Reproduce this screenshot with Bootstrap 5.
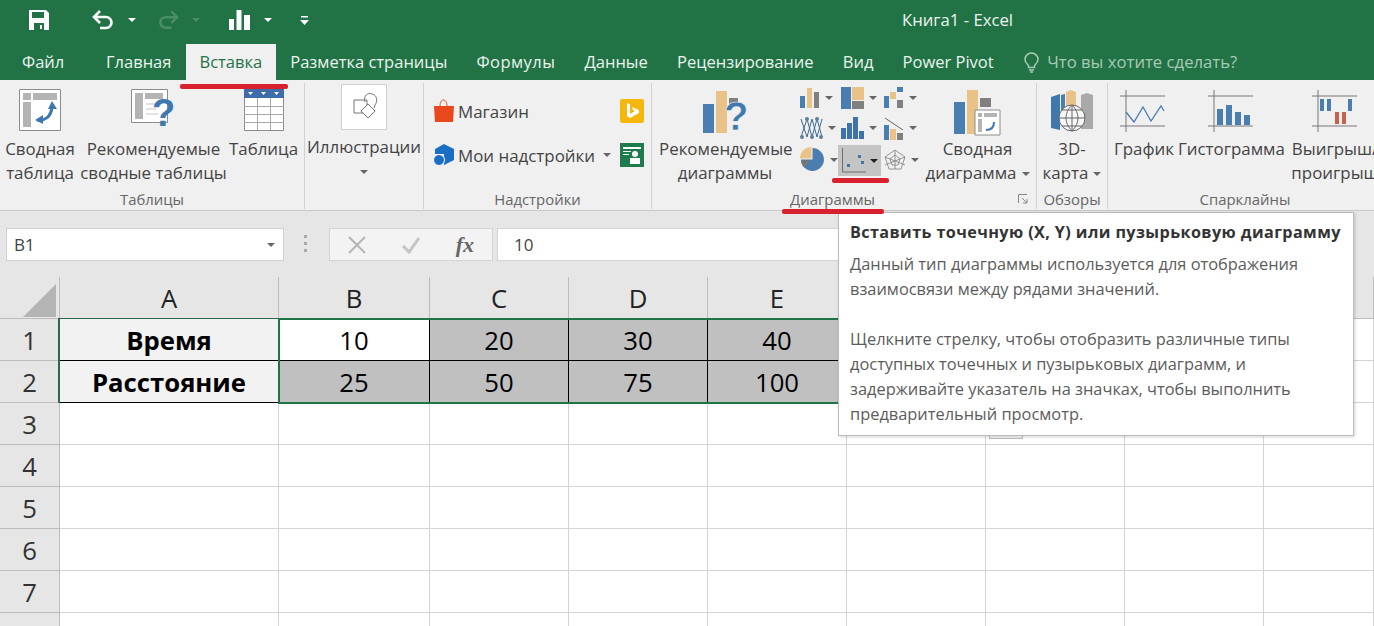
<!DOCTYPE html>
<html lang="ru"><head><meta charset="utf-8"><title>Книга1 - Excel</title>
<link href="https://cdn.jsdelivr.net/npm/bootstrap@5.3.0/dist/css/bootstrap.min.css" rel="stylesheet">
<style>
html,body{margin:0;height:626px;overflow:hidden;background:#fff}
body{font-family:"Open Sans","Noto Sans",sans-serif;position:relative;width:1374px}
svg{display:block;flex:none}
.x-caret{display:inline-block;width:0;height:0;border:4px solid transparent;border-top:4px solid #666;border-bottom:0;vertical-align:middle;margin-left:5px;flex:none}
/* title bar */
.x-title{height:40px;background:#217346;color:#fff}
.x-qat{height:40px;width:902px;padding-left:29px}
.x-doc{font-size:16.7px;line-height:40px;color:#eef5f0}
.x-wc{border-top-color:#fff;margin-left:14px}
.x-dc{border-top-color:#4c8d69;margin-left:13px}
.x-m43{margin-left:43px}.x-m22{margin-left:22px}.x-m29{margin-left:29px}.x-m35{margin-left:28px}
/* tabs */
.x-tabs{height:40px;background:#217346;color:#eaf3ed;font-size:16.5px;padding-left:8px}
.x-tab{height:36px;line-height:36px;padding:0 14.6px;white-space:nowrap}
.x-tab.on{background:#f0f0f0;color:#217346;padding:0 13.5px}
.x-tfile{width:86px;padding:0 14px}
.x-tmain{width:92px;padding:0 0 0 12px}
.x-tform{letter-spacing:.45px}
.x-tell{color:#a9c9b5;padding-left:16px;font-size:16.7px}
/* ribbon */
.x-ribbon{height:131px;background:#f0f0f0;color:#444;border-bottom:1px solid #c9c9c9;overflow:hidden}
.x-grp{height:126px;margin-top:3px;border-right:1px solid #d2d2d2;flex:none}
.x-body{height:106px}
.x-cap{height:20px;line-height:20px;text-align:center;font-size:14.9px;color:#666}
.x-btn{text-align:center;font-size:16.9px;line-height:24px;flex:none;white-space:nowrap;padding-top:6px}
.x-btn svg{margin:0 auto 6px;overflow:visible}
.x-tall{padding-top:7px}
.x-tall svg{margin-bottom:0}
.x-g1{width:305px}.x-g2{width:119px}.x-g3{width:228px}.x-g4{width:385px}.x-g5{width:71px}.x-g6{width:266px;border:0}
.x-w80{width:80px}.x-w147{width:147px}.x-w73{width:73px}
.x-ill{padding-top:1px}
.x-ill svg{margin-bottom:5px}
.x-addons{padding:16px 0 0 9px;width:220px;gap:20px}
.x-arow{height:24px}
.x-add{font-size:16.9px;line-height:24px;white-space:nowrap;margin-left:4px;padding-top:1px}
.x-addc{margin-left:8px}
.x-tile{width:24px;height:24px;border-radius:2px}
.x-bing{background:#f5b60e}
.x-pres{background:#1e7b4b;border-radius:0}
.x-rec{margin-left:7px;width:132px}
.x-gal{margin-left:9px;width:121px;display:grid;grid-template-columns:41px 43px 37px;grid-template-rows:30px 30px 33px}
.x-hi{background:#c4c4c4;height:31px;width:43px;margin:2px 0 0 -3px;padding-left:3px;align-self:start}
.x-hc{border-top-color:#222;margin-left:1px}
.x-piv{margin-left:4px;width:105px}
.x-capd{padding-left:138px;text-align:left}
.x-launch{margin:0 8px 0 auto}
.x-map{width:100%}
.x-spark{padding-left:6px;gap:6px}
.x-w58{width:58px}.x-w106{width:106px}.x-w90{width:90px}
.x-caps{padding-left:8px}
/* formula bar */
.x-fbar{height:66px;background:#e6e6e6;padding:17px 0 0 6px;color:#444}
.x-name{width:278px;height:33px;background:#fff;border:1px solid #d0d0d0;font-size:17px;line-height:31px;padding-left:7px}
.x-dots{width:3px;height:19px;margin:7px 0 0 20px;background:repeating-linear-gradient(#aaa 0 3px,transparent 3px 7px)}
.x-fx{width:164px;height:33px;background:#f3f3f3;border:1px solid #d4d4d4;margin-left:22px;padding:0 18px}
.x-fxt{font-family:"Liberation Serif",serif;font-style:italic;font-weight:700;font-size:22px;line-height:20px;color:#666}
.x-val{width:850px;height:33px;background:#fff;border:1px solid #d4d4d4;margin-left:4px;font-size:17px;line-height:31px;padding-left:16px}
/* sheet */
.x-sheet{display:grid;grid-template-columns:60px 219px 151px repeat(6,139px) 110px;grid-auto-rows:42px;background:#fff;height:349px;overflow:hidden;color:#000}
.x-c{border-right:1px solid #d4d4d4;border-bottom:1px solid #d4d4d4;text-align:center;font-size:25.7px;line-height:43px;overflow:hidden;white-space:nowrap}
.x-h{background:#e6e6e6;color:#222;border-color:#bdbdbd}
.x-rn{background:#e6e6e6;color:#333;border-color:#bdbdbd}
.x-l{background:#f2f2f2;font-weight:700;border-right-color:#000;border-bottom-color:#000}
.x-d{background:#c0c0c0;border-right-color:#000;border-bottom-color:#000}
.x-w{background:#fff;border-right-color:#000;border-bottom-color:#000}
.x-corner{width:0;height:0;border-style:solid;border-width:0 0 33px 33px;border-color:transparent transparent #b4b4b4 transparent;margin:7px 0 0 23px}
/* overlays */
.x-sel{position:absolute;left:278px;top:318px;width:570px;height:86px;border:2px solid #217346;pointer-events:none}
.x-sel2{position:absolute;left:58px;top:318px;width:220px;height:85px;border:1px solid #2a6a4a;border-width:1px 0 0 2px;pointer-events:none}
.x-red{position:absolute;height:5px;background:#d9202e;border-radius:2px}
.x-r1{left:180px;top:84px;width:108px}
.x-r2{left:832px;top:178px;width:57px}
.x-r3{left:782px;top:209px;width:102px}
.x-tip{position:absolute;left:838px;top:212px;width:516px;height:224px;background:#fff;border:1px solid #bdbdbd;box-shadow:1px 1px 3px rgba(0,0,0,.18);padding:7px 11px;font-size:16.4px;line-height:25px;color:#5c5c5c}
.x-tip b{display:block;color:#333;font-weight:700;font-size:16.2px;letter-spacing:.4px;margin-bottom:6px;white-space:nowrap}
.x-tip p{margin:0 0 25px;white-space:nowrap}
.x-qa{position:absolute;left:989px;top:430px;width:34px;height:9px;border:1px solid #bdbdbd;background:#f5f5f5}
</style></head><body>
<div class="x-title d-flex">
<div class="x-qat d-flex align-items-center flex-none">
<svg width="20" height="20" viewBox="0 0 20 20"><path fill="#fff" d="M0 0h17l3 3v17H0z"/><path fill="#217346" d="M3 2h12v6H3zM5 13h10v7H5z"/><path fill="#fff" d="M11 15h2v4h-2z"/></svg>
<svg class="x-m43" width="22" height="20" viewBox="0 0 22 20"><path fill="none" stroke="#fff" stroke-width="2.6" d="M2 7h12a5.500 5.500 0 0 1 0 11H8M8 1 2 7l6 6"/></svg>
<span class="x-caret x-wc"></span>
<svg class="x-m22" width="21" height="20" viewBox="0 0 22 20"><path fill="none" stroke="#4c8d69" stroke-width="2.6" d="M20 7H8a5.500 5.500 0 0 0 0 11h6M14 1l6 6-6 6"/></svg>
<span class="x-caret x-dc"></span>
<svg class="x-m29" width="21" height="20" viewBox="0 0 21 20"><path fill="#fff" d="M0 9h5v11H0zM7.500 0h5v20h-5zM15 5h6v15h-6z"/></svg>
<span class="x-caret x-wc"></span>
<svg class="x-m35" width="9" height="9" viewBox="0 0 9 9"><path fill="#fff" d="M1 0h7v1.500H1zM0 4h9L4.500 9z"/></svg>
</div>
<div class="x-doc">Книга1 - Excel</div>
</div>
<div class="x-tabs d-flex align-items-end">
<div class="x-tab x-tfile">Файл</div>
<div class="x-tab x-tmain">Главная</div>
<div class="x-tab on">Вставка</div>
<div class="x-tab">Разметка страницы</div>
<div class="x-tab x-tform">Формулы</div>
<div class="x-tab">Данные</div>
<div class="x-tab">Рецензирование</div>
<div class="x-tab">Вид</div>
<div class="x-tab">Power Pivot</div>
<div class="x-tab x-tell d-flex align-items-center">
<svg class="me-2" width="15" height="21" viewBox="0 0 15 21"><path fill="none" stroke="#a9c9b5" stroke-width="1.500" d="M4.500 13.500C3 12 1 10.500 1 7.500a6.500 6.500 0 0 1 13 0c0 3-2 4.500-3.500 6v2h-6zM5 18h5M6 20h3"/></svg>Что вы хотите сделать?</div>
</div>
<div class="x-ribbon d-flex">
<section class="x-grp x-g1">
<div class="x-body d-flex">
<div class="x-btn x-w80"><svg width="42" height="42" viewBox="0 0 42 42"><path fill="#fff" stroke="#8c8c8c" d="M.5.500h41v41H.5z"/><path fill="#b4b4b4" d="M4 4h8v7H4zM14 4h24v7H14zM4 13h8v25H4z"/><path fill="none" stroke="#3f78ad" stroke-width="3" d="M18 31c8 1 14-3 15-13"/><path fill="#3f78ad" d="m33 12 5 8h-9zM16 31l8-5v9z"/></svg>Сводная<br>таблица</div>
<div class="x-btn x-w147"><svg width="46" height="42" viewBox="0 0 46 42"><path fill="#fff" stroke="#8c8c8c" d="M.5.500h36v33H.5z"/><path fill="#b4b4b4" d="M4 4h8v26H4zM14 4h18v6H14z"/><path stroke="#c4c4c4" d="M15 15h14M15 20h10M15 25h12"/><text x="21" y="37" font-family="Liberation Sans" font-size="38" font-weight="700" fill="#3f78ad">?</text></svg>Рекомендуемые<br>сводные таблицы</div>
<div class="x-btn x-w73"><svg width="40" height="42" viewBox="0 0 40 42"><path fill="#fff" stroke="#8c8c8c" d="M.5.500h39v41H.5z"/><path fill="#3f6cab" d="M0 0h40v9H0z"/><path stroke="#a8a8a8" d="M13.500 9v32M26.500 9v32M0 17.500h40M0 25.500h40M0 33.500h40" fill="none"/><path fill="#fff" d="m4 3 5 0-2.500 3zM17 3h5l-2.500 3zM30 3h5l-2.500 3z"/></svg>Таблица</div>
</div>
<div class="x-cap">Таблицы</div>
</section>
<section class="x-grp x-g2">
<div class="x-body d-flex justify-content-center">
<div class="x-btn x-ill"><svg width="46" height="46" viewBox="0 0 46 46"><path fill="#fff" stroke="#d0d0d0" d="M.5.500h45v45H.5z"/><g fill="none" stroke="#777"><path d="M13 16h13v13H13z"/><path d="M24 18c-2-6 3-10 7-8 5 1 6 7 3 11l-1 3"/><path d="m27 20 7 7-7 7-7-7z" fill="#fff"/></g></svg>Иллюстрации<br><span class="x-caret m-0"></span></div>
</div>
</section>
<section class="x-grp x-g3">
<div class="x-body x-addons d-flex flex-column">
<div class="x-arow d-flex align-items-center">
<svg width="21" height="24" viewBox="0 0 21 24"><path fill="#e8481c" d="M1 7h20l-1 16H2z"/><path fill="none" stroke="#e8481c" d="M7 7c0-8 7-8 7 0"/></svg><span class="x-add">Магазин</span>
<div class="x-tile x-bing ms-auto"><svg width="24" height="24" viewBox="0 0 24 24"><path fill="#fff" d="M7 4l3 1v10l5-3-2-1-1-3 7 3v3l-9 5-3-2z"/></svg></div>
</div>
<div class="x-arow d-flex align-items-center">
<svg width="21" height="23" viewBox="0 0 21 23"><path fill="#1a6fc4" d="m11 0 10 5v11l-10 5z"/><path fill="#1a6fc4" d="M11 0 2 5v5h9z"/><circle cx="6" cy="16" r="5.500" fill="#1a6fc4" stroke="#fff"/></svg><span class="x-add">Мои надстройки</span><span class="x-caret x-addc"></span>
<div class="x-tile x-pres ms-auto"><svg width="24" height="24" viewBox="0 0 24 24"><path fill="#fff" d="M3 4h18v2H3zM3 8h8v1H3zM3 11h6v1H3z"/><circle cx="15" cy="11" r="3" fill="#fff"/><path fill="#fff" d="M10 15h10v6H10z"/></svg></div>
</div>
</div>
<div class="x-cap">Надстройки</div>
</section>
<section class="x-grp x-g4">
<div class="x-body d-flex">
<div class="x-btn x-tall x-rec"><svg width="47" height="47" viewBox="0 0 47 47"><path fill="#4a7db0" d="M1 14h11v29H1z"/><path fill="#e9c288" d="M14 1h11v42H14z"/><path fill="#808080" d="M27 8h9v9h-9z"/><text x="22" y="40" font-family="Liberation Sans" font-size="40" font-weight="700" fill="#3f78ad" stroke="#f0f0f0" stroke-width=".6">?</text></svg>Рекомендуемые<br>диаграммы</div>
<div class="x-gal">
<div class="d-flex align-items-center"><svg width="20" height="22" viewBox="0 0 20 22"><path fill="#4a7db0" d="M0 9h5v12H0z"/><path fill="#e9c288" d="M7 1h5v20H7z"/><path fill="#808080" d="M14 5h5v16h-5z"/></svg><span class="x-caret"></span></div>
<div class="d-flex align-items-center"><svg width="23" height="22" viewBox="0 0 23 22"><path fill="#4a7db0" d="M0 0h10v22H0z"/><path fill="#e9c288" d="M11 0h12v13H11z"/><path fill="#808080" d="M11 14h12v8H11z"/></svg><span class="x-caret"></span></div>
<div class="d-flex align-items-center"><svg width="20" height="22" viewBox="0 0 20 22"><path fill="#4a7db0" d="M0 9h5v12H0zM13 0h6v5h-6z" /><path fill="#e9c288" d="M6 5h6v7H6z"/><path fill="#808080" d="M13 13h6v8h-6z"/></svg><span class="x-caret"></span></div>
<div class="d-flex align-items-center"><svg width="23" height="24" viewBox="0 0 23 24"><path fill="none" stroke="#3f6a94" d="M1 3l6 18 5-18 5 18 5-18M1 21l6-18 5 18 5-18 5 18"/><g fill="#5f7f9e"><circle cx="2" cy="21" r="2"/><circle cx="12" cy="21" r="2"/><circle cx="21" cy="21" r="2"/><circle cx="7" cy="3" r="2"/><circle cx="17" cy="3" r="2"/></g></svg><span class="x-caret"></span></div>
<div class="d-flex align-items-center"><svg width="23" height="22" viewBox="0 0 23 22"><path fill="#3f72a8" d="M0 11h5v11H0zM6 6h5v16H6zM12 0h5v22h-5zM18 14h5v8h-5z"/></svg><span class="x-caret"></span></div>
<div class="d-flex align-items-center"><svg width="20" height="24" viewBox="0 0 20 24"><path fill="#4a7db0" d="M0 9h5v15H0z"/><path fill="#e9c288" d="M6 13h6v11H6z"/><path fill="#808080" d="M13 17h6v7h-6z"/><path fill="none" stroke="#666" d="m1 2 18 12"/></svg><span class="x-caret"></span></div>
<div class="d-flex align-items-center"><svg width="25" height="25" viewBox="0 0 24 24"><path fill="#4a7db0" d="M12 1a11 11 0 1 1-11 11h11z"/><path fill="#e9c288" d="M11 0v11H0A11 11 0 0 1 11 0z"/><path fill="#777" d="M1 13h9l-6 7a11 11 0 0 1-3-7z"/></svg><span class="x-caret"></span></div>
<div class="d-flex align-items-center x-hi"><svg width="28" height="27" viewBox="0 0 28 27"><path fill="none" stroke="#6f6f6f" d="M1.500 1v24H25"/><g fill="#3f78ad"><rect x="6" y="17" width="3" height="3"/><rect x="17" y="8" width="3" height="3"/><rect x="20" y="14" width="3" height="3"/></g></svg><span class="x-caret x-hc"></span></div>
<div class="d-flex align-items-center"><svg width="22" height="24" viewBox="0 0 22 22"><g fill="none" stroke="#8a8a8a" stroke-width=".9"><path d="m11 1 10 7-4 12H5L1 8z"/><path d="m11 6 5 4-2 6H8L6 10zM11 1v19M1 8l20 8M21 8 1 16"/></g></svg><span class="x-caret"></span></div>
</div>
<div class="x-btn x-tall x-piv"><svg width="47" height="47" viewBox="0 0 47 47"><path fill="#4a7db0" d="M0 12h11v32H0z"/><path fill="#e9c288" d="M13 0h11v44H13z"/><path fill="#808080" d="M26 8h11v9H26z"/><path fill="#fff" stroke="#8c8c8c" d="M21 20h25v25H21z"/><path fill="#b4b4b4" d="M24 23h4v4h-4zM30 23h13v4H30zM24 29h4v13h-4z"/><path fill="none" stroke="#3f78ad" stroke-width="2" d="M32 40c5 0 8-3 8-8"/></svg>Сводная<br>диаграмма<span class="x-caret"></span></div>
</div>
<div class="x-cap x-capd d-flex align-items-center"><span>Диаграммы</span><svg class="x-launch" width="10" height="10" viewBox="0 0 10 10"><path fill="none" stroke="#888" d="M.5 9V.5H9M4 4l5 5M9 5v4H5"/></svg></div>
</section>
<section class="x-grp x-g5">
<div class="x-body d-flex">
<div class="x-btn x-tall x-map"><svg width="42" height="47" viewBox="0 0 42 47"><path fill="#3f78ad" d="M0 7l9-3v36l-9-2z"/><path fill="#e9c288" d="M15 2l5-2 5 2v28H15z"/><path fill="#a9a9a9" d="M30 5l6-2 6 2v34H30z"/><path fill="#4a7db0" d="M10 5l4-1v30h-4z"/><circle cx="21" cy="28" r="13" fill="#f7f7f7" stroke="#666"/><path fill="none" stroke="#666" d="M8 28h26M21 15v26M11 20h20M11 36h20M21 15c-8 8-8 18 0 26M21 15c8 8 8 18 0 26"/></svg>3D-<br>карта<span class="x-caret"></span></div>
</div>
<div class="x-cap">Обзоры</div>
</section>
<section class="x-grp x-g6">
<div class="x-body x-spark d-flex">
<div class="x-btn x-tall x-w58"><svg width="46" height="47" viewBox="0 0 46 47"><path fill="none" stroke="#777" d="M6 0v42M0 6h45M0 36h45"/><path fill="none" stroke="#4a7db0" stroke-width="1.300" d="m6 22 8 10 9-15 8 14 10-15 3 5"/></svg>График</div>
<div class="x-btn x-tall x-w106"><svg width="46" height="47" viewBox="0 0 46 47"><path fill="none" stroke="#777" d="M6 0v42M0 6h45M0 36h45"/><path fill="#4a7db0" d="M9 19h6v16H9zM18 15h6v20h-6zM27 22h6v13h-6zM36 25h6v10h-6z"/></svg>Гистограмма</div>
<div class="x-btn x-tall x-w90"><svg width="46" height="47" viewBox="0 0 46 47"><path fill="none" stroke="#777" d="M6 0v42M0 6h45M0 36h45"/><path fill="#4a7db0" d="M8 9h4v12H8zM15 9h4v12h-4zM36 9h4v12h-4z"/><path fill="#c9614a" d="M23 22h4v12h-4zM30 22h4v12h-4z"/></svg>Выигрыш/<br>проигрыш</div>
</div>
<div class="x-cap x-caps">Спарклайны</div>
</section>
</div>
<div class="x-fbar d-flex">
<div class="x-name d-flex justify-content-between align-items-center pe-2"><span>B1</span><span class="x-caret"></span></div>
<div class="x-dots"></div>
<div class="x-fx d-flex align-items-center justify-content-between">
<svg width="18" height="18" viewBox="0 0 18 18"><path stroke="#b5b5b5" stroke-width="2" d="m1 1 16 16M17 1 1 17"/></svg>
<svg width="20" height="18" viewBox="0 0 20 18"><path fill="none" stroke="#c4c4c4" stroke-width="3" d="m2 10 6 6L18 2"/></svg>
<span class="x-fxt">fx</span>
</div>
<div class="x-val">10</div>
</div>
<div class="x-sheet">
<div class="x-c x-h"><div class="x-corner"></div></div><div class="x-c x-h">A</div><div class="x-c x-h">B</div><div class="x-c x-h">C</div><div class="x-c x-h">D</div><div class="x-c x-h">E</div><div class="x-c x-h"></div><div class="x-c x-h"></div><div class="x-c x-h"></div><div class="x-c x-h"></div>
<div class="x-c x-rn">1</div><div class="x-c x-l">Время</div><div class="x-c x-w">10</div><div class="x-c x-d">20</div><div class="x-c x-d">30</div><div class="x-c x-d">40</div><div class="x-c"></div><div class="x-c"></div><div class="x-c"></div><div class="x-c"></div>
<div class="x-c x-rn">2</div><div class="x-c x-l">Расстояние</div><div class="x-c x-d">25</div><div class="x-c x-d">50</div><div class="x-c x-d">75</div><div class="x-c x-d">100</div><div class="x-c"></div><div class="x-c"></div><div class="x-c"></div><div class="x-c"></div>
<div class="x-c x-rn">3</div><div class="x-c"></div><div class="x-c"></div><div class="x-c"></div><div class="x-c"></div><div class="x-c"></div><div class="x-c"></div><div class="x-c"></div><div class="x-c"></div><div class="x-c"></div>
<div class="x-c x-rn">4</div><div class="x-c"></div><div class="x-c"></div><div class="x-c"></div><div class="x-c"></div><div class="x-c"></div><div class="x-c"></div><div class="x-c"></div><div class="x-c"></div><div class="x-c"></div>
<div class="x-c x-rn">5</div><div class="x-c"></div><div class="x-c"></div><div class="x-c"></div><div class="x-c"></div><div class="x-c"></div><div class="x-c"></div><div class="x-c"></div><div class="x-c"></div><div class="x-c"></div>
<div class="x-c x-rn">6</div><div class="x-c"></div><div class="x-c"></div><div class="x-c"></div><div class="x-c"></div><div class="x-c"></div><div class="x-c"></div><div class="x-c"></div><div class="x-c"></div><div class="x-c"></div>
<div class="x-c x-rn">7</div><div class="x-c"></div><div class="x-c"></div><div class="x-c"></div><div class="x-c"></div><div class="x-c"></div><div class="x-c"></div><div class="x-c"></div><div class="x-c"></div><div class="x-c"></div>
<div class="x-c x-rn">8</div><div class="x-c"></div><div class="x-c"></div><div class="x-c"></div><div class="x-c"></div><div class="x-c"></div><div class="x-c"></div><div class="x-c"></div><div class="x-c"></div><div class="x-c"></div>
</div>
<div class="x-sel2"></div>
<div class="x-sel"></div>
<div class="x-qa"></div>
<div class="x-red x-r1"></div>
<div class="x-red x-r2"></div>
<div class="x-tip">
<b>Вставить точечную (X, Y) или пузырьковую диаграмму</b>
<p>Данный тип диаграммы используется для отображения<br>взаимосвязи между рядами значений.</p>
<p>Щелкните стрелку, чтобы отобразить различные типы<br>доступных точечных и пузырьковых диаграмм, и<br>задерживайте указатель на значках, чтобы выполнить<br>предварительный просмотр.</p>
</div>
<div class="x-red x-r3"></div>
<script src="https://cdn.jsdelivr.net/npm/bootstrap@5.3.0/dist/js/bootstrap.bundle.min.js"></script>
</body></html>
